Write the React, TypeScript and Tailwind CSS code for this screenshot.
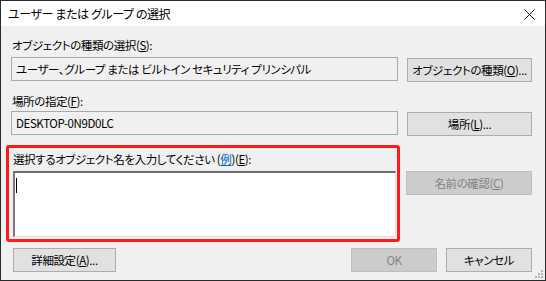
import React from 'react';

const Btn: React.FC<{ children: React.ReactNode; className?: string; disabled?: boolean }> = ({
  children,
  className = '',
  disabled = false,
}) => (
  <button
    className={
      'h-[24px] flex items-center justify-center border whitespace-nowrap text-[11.5px] tracking-[-0.4px] ' +
      (disabled
        ? 'bg-[#cccccc] border-[#bfbfbf] text-[#838383] '
        : 'bg-[#e1e1e1] border-[#adadad] text-black ') +
      className
    }
  >
    {children}
  </button>
);

const App: React.FC = () => {
  return (
    <div className="w-[546px] h-[281px] border border-[#2b2b2b] bg-[#f0f0f0] flex flex-col relative font-['Noto_Sans_CJK_JP',sans-serif] [font-feature-settings:'palt'] text-[11.5px] tracking-[-0.4px] leading-[16px] text-black">
      {/* Title bar */}
      <div className="h-[25px] bg-white flex items-center justify-between pl-[7px] pr-[10px]">
        <span className="text-[12px]">ユーザー または グループ の選択</span>
        <svg width="11" height="11" viewBox="0 0 11 11" className="mt-[1px]">
          <path d="M0.5 0.5 L10.5 10.5 M10.5 0.5 L0.5 10.5" stroke="#111" strokeWidth="1" />
        </svg>
      </div>

      {/* Body */}
      <div className="flex flex-col pl-[10px] pr-[13px]">
        <div className="mt-[11px] pl-[1px]">
          オブジェクトの種類の選択(<u>S</u>):
        </div>
        <div className="flex gap-[9px] mt-[4px]">
          <div className="w-[387px] h-[24px] border border-[#a9a9a9] flex items-center pl-[4px]">
            ユーザー、グループ または ビルトイン セキュリティ プリンシパル
          </div>
          <Btn className="w-[125px] mt-[1px]">
            オブジェクトの種類(<u>O</u>)...
          </Btn>
        </div>

        <div className="mt-[11px] pl-[1px]">
          場所の指定(<u>F</u>):
        </div>
        <div className="flex gap-[9px] mt-[2px]">
          <div className="w-[387px] h-[24px] border border-[#a9a9a9] flex items-center pl-[4px]">
            DESKTOP-0N9D0LC
          </div>
          <Btn className="w-[125px] mt-[1px]">
            場所(<u>L</u>)...
          </Btn>
        </div>

        {/* Object name entry */}
        <div className="flex gap-[6px] mt-[9px]">
          <div className="-ml-[5px] w-[394px] h-[97px] border-[3px] border-[#ff1a1a] rounded-[3px] flex flex-col pl-[4px] pr-[1px]">
            <div className="mt-[3px]">
              選択するオブジェクト名を入力してください (<span className="text-[#0066cc] underline">例</span>)(<u>E</u>):
            </div>
            <div className="mt-[4px] h-[66px] bg-white border-t-2 border-l-2 border-t-[#6d6d6d] border-l-[#7a7a7a] border-r border-b border-r-[#e3e3e3] border-b-[#e3e3e3] pl-[1px] pt-[5px]">
              <div className="w-[1px] h-[15px] bg-black" />
            </div>
          </div>
          <Btn disabled className="w-[126px] mt-[26px] h-[23px]">
            名前の確認(<u>C</u>)
          </Btn>
        </div>

        {/* Bottom buttons */}
        <div className="flex items-center mt-[6px]">
          <Btn className="w-[103px] ml-[2px]">
            詳細設定(<u>A</u>)...
          </Btn>
          <div className="flex-1" />
          <Btn disabled className="w-[86px]">
            OK
          </Btn>
          <Btn className="w-[86px] ml-[9px]">キャンセル</Btn>
        </div>
      </div>

      {/* Size grip */}
      <svg width="9" height="9" viewBox="0 0 9 9" className="absolute right-[1px] bottom-[1px]">
        <rect x="6" y="0" width="2" height="2" fill="#b8b8b8" />
        <rect x="3" y="3" width="2" height="2" fill="#b8b8b8" />
        <rect x="6" y="3" width="2" height="2" fill="#b8b8b8" />
        <rect x="0" y="6" width="2" height="2" fill="#b8b8b8" />
        <rect x="3" y="6" width="2" height="2" fill="#b8b8b8" />
        <rect x="6" y="6" width="2" height="2" fill="#b8b8b8" />
      </svg>
    </div>
  );
};

export default App;
